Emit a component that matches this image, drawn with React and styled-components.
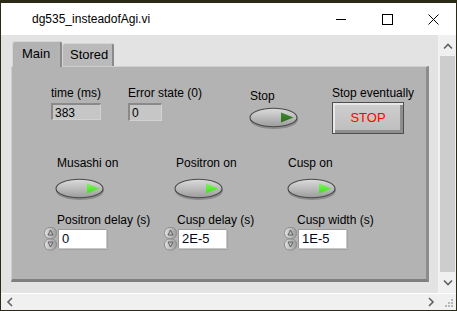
import React from "react";
import styled, { createGlobalStyle } from "styled-components";

const Global = createGlobalStyle`
  html, body { margin: 0; padding: 0; background: #2a2a17; }
  body { font-family: "Liberation Sans", Arial, sans-serif; font-size: 12px; color: #000; }
  * { box-sizing: border-box; }
`;

const Window = styled.div`
  width: 457px;
  height: 311px;
  display: flex;
  flex-direction: column;
  background: #2a2a17;
  padding: 3px 1px 1px 1px;
  overflow: hidden;
`;

const TitleBar = styled.div`
  height: 32px;
  background: #ffffff;
  display: flex;
  align-items: center;
  padding-left: 31px;
  flex-shrink: 0;
`;

const Title = styled.div`
  flex: 1;
  font-size: 12px;
  color: #000;
  margin-top: -1px;
`;

const CaptionButton = styled.div`
  width: 46px;
  height: 32px;
  display: flex;
  align-items: center;
  justify-content: center;
`;

const Body = styled.div`
  height: 258px;
  display: flex;
  flex-shrink: 0;
`;

const Content = styled.div`
  flex: 1;
  background: #e3e3e3;
  padding: 5px 0 0 10px;
  border-right: 1px solid #f4f4f4;
`;

const VScroll = styled.div`
  width: 17px;
  background: #f0f0f0;
  display: flex;
  flex-direction: column;
  align-items: center;
`;

const ScrollArrow = styled.div`
  height: 21px;
  width: 17px;
  display: flex;
  align-items: center;
  justify-content: center;
`;

const VThumb = styled.div`
  width: 15px;
  height: 216px;
  background: #cdcdcd;
`;

const HScroll = styled.div`
  height: 17px;
  background: #f0f0f0;
  display: flex;
  align-items: center;
  flex-shrink: 0;
  border-top: 1px solid #ffffff;
`;

const HTrack = styled.div`
  flex: 1;
`;

const Tabs = styled.div`
  display: flex;
  align-items: flex-end;
  height: 26px;
  padding-left: 1px;
  position: relative;
  z-index: 1;
`;

const Tab = styled.div`
  width: ${(p) => p.$w}px;
  height: ${(p) => (p.$active ? 26 : 23)}px;
  background: ${(p) => (p.$active ? "#b3b3b3" : "#bababa")};
  border-top: 1px solid #d6d6d6;
  border-left: 1px solid #d6d6d6;
  border-right: 2px solid #8a8a8a;
  border-top-left-radius: 3px;
  border-top-right-radius: 3px;
  padding: ${(p) => (p.$active ? "4px 0 0 9px" : "3px 0 0 7px")};
  font-size: 13px;
  color: #000;
  margin-bottom: ${(p) => (p.$active ? -1 : 0)}px;
`;

const Panel = styled.div`
  width: 418px;
  height: 216px;
  background: #b3b3b3;
  border-top: 1px solid #cfcfcf;
  border-left: 1px solid #cfcfcf;
  border-right: 3px solid #8c8c8c;
  border-bottom: 3px solid #7f7f7f;
  display: flex;
  flex-direction: column;
  padding-top: 19px;
`;

const Row = styled.div`
  display: grid;
  grid-template-columns: ${(p) => p.$cols};
  padding-left: ${(p) => p.$left}px;
  margin-top: ${(p) => p.$mt}px;
  height: ${(p) => p.$h}px;
  align-items: start;
`;

const Control = styled.div`
  display: flex;
  flex-direction: column;
  align-items: flex-start;
  margin-top: ${(p) => p.$mt || 0}px;
`;

const Label = styled.div`
  font-size: 12px;
  line-height: 14px;
  white-space: nowrap;
  margin-left: ${(p) => p.$ml || 0}px;
  margin-bottom: ${(p) => p.$mb || 0}px;
`;

const Indicator = styled.div`
  width: ${(p) => p.$w}px;
  height: ${(p) => p.$h}px;
  background: #c6c6c6;
  border-top: 2px solid #8a8a8a;
  border-left: 2px solid #8a8a8a;
  border-right: 1px solid #d2d2d2;
  border-bottom: 1px solid #d2d2d2;
  padding: 1px 0 0 2px;
  font-size: 12px;
  line-height: 14px;
`;

const StopButton = styled.div`
  width: 72px;
  height: 32px;
  border: 1px solid #4e4e4e;
  background: linear-gradient(#cfcfcf, #bdbdbd);
  box-shadow: inset 2px 2px 0 #e8e8e8, inset -3px -3px 0 #8e8e8e;
  display: flex;
  align-items: center;
  justify-content: center;
  color: #ff0000;
  font-size: 13px;
  padding-bottom: 1px;
`;

const NumRow = styled.div`
  display: flex;
  align-items: flex-start;
  gap: 1px;
`;

const NumInput = styled.div`
  width: 49px;
  height: 20px;
  margin-top: 2px;
  background: #ffffff;
  border-top: 1px solid #9a9a9a;
  border-left: 1px solid #9a9a9a;
  border-right: 1px solid #c8c8c8;
  border-bottom: 1px solid #c8c8c8;
  box-shadow: 1px 1px 0 #a4a4a4;
  padding: 1px 0 0 3px;
  font-size: 13px;
  line-height: 16px;
  color: #05051a;
`;

const Toggle = ({ led }) => {
  const id = "g" + led.replace("#", "");
  return (
    <svg width="52" height="24" viewBox="0 0 52 24">
      <defs>
        <linearGradient id={id + "b"} x1="0" y1="0" x2="0" y2="1">
          <stop offset="0" stopColor="#dcdcdc" />
          <stop offset="0.5" stopColor="#bcbcbc" />
          <stop offset="1" stopColor="#9c9c9c" />
        </linearGradient>
        <linearGradient id={id + "t"} x1="0" y1="0" x2="0" y2="1">
          <stop offset="0" stopColor={led === "#3fe21c" ? "#7cf25a" : "#3f8a2c"} />
          <stop offset="1" stopColor={led} />
        </linearGradient>
      </defs>
      <ellipse cx="25" cy="12.5" rx="24" ry="9.5" fill="#6a6a6a" opacity="0.55" />
      <ellipse cx="24.5" cy="10.5" rx="23.5" ry="9.3" fill={`url(#${id}b)`} stroke="#4a4a4a" strokeWidth="1.1" />
      <path d="M32 5.5 L44.5 10.5 L32 15.5 Z" fill={`url(#${id}t)`} />
    </svg>
  );
};

const Spinner = () => (
  <svg width="13" height="24" viewBox="0 0 13 24">
    <defs>
      <linearGradient id="sp" x1="0" y1="0" x2="1" y2="0">
        <stop offset="0" stopColor="#e2e2e2" />
        <stop offset="1" stopColor="#9a9a9a" />
      </linearGradient>
    </defs>
    <rect x="0.5" y="0.5" width="12" height="11" rx="5" fill="url(#sp)" stroke="#8c8c8c" />
    <rect x="0.5" y="12" width="12" height="11" rx="5" fill="url(#sp)" stroke="#8c8c8c" />
    <path d="M6.5 3 L9 8 L4 8 Z" fill="none" stroke="#555" strokeWidth="0.9" />
    <path d="M6.5 20 L9 15 L4 15 Z" fill="none" stroke="#555" strokeWidth="0.9" />
  </svg>
);

const Numeric = ({ label, value }) => (
  <Control>
    <Label $ml={13} $mb={0}>{label}</Label>
    <NumRow>
      <Spinner />
      <NumInput>{value}</NumInput>
    </NumRow>
  </Control>
);

const Chevron = ({ d }) => (
  <svg width="10" height="8" viewBox="0 0 10 8">
    <path d={d} fill="none" stroke="#606060" strokeWidth="1.6" />
  </svg>
);

export default function App() {
  return (
    <>
      <Global />
      <Window>
        <TitleBar>
          <Title>dg535_insteadofAgi.vi</Title>
          <CaptionButton>
            <svg width="10" height="10" viewBox="0 0 10 10">
              <path d="M0 5.5 H10" stroke="#000" strokeWidth="1" />
            </svg>
          </CaptionButton>
          <CaptionButton>
            <svg width="11" height="11" viewBox="0 0 11 11">
              <rect x="0.5" y="0.5" width="10" height="10" fill="none" stroke="#000" strokeWidth="1" />
            </svg>
          </CaptionButton>
          <CaptionButton>
            <svg width="11" height="11" viewBox="0 0 11 11">
              <path d="M0.5 0.5 L10.5 10.5 M10.5 0.5 L0.5 10.5" stroke="#000" strokeWidth="1" />
            </svg>
          </CaptionButton>
        </TitleBar>
        <Body>
          <Content>
            <Tabs>
              <Tab $active $w={50}>Main</Tab>
              <Tab $w={52}>Stored</Tab>
            </Tabs>
            <Panel>
              <Row $cols="77px 121px 83px auto" $left={39} $mt={0} $h={48}>
                <Control>
                  <Label $mb={3}>time (ms)</Label>
                  <Indicator $w={50} $h={17}>383</Indicator>
                </Control>
                <Control>
                  <Label $mb={3}>Error state (0)</Label>
                  <Indicator $w={34} $h={18}>0</Indicator>
                </Control>
                <Control $mt={3}>
                  <Label $mb={4} $ml={1}>Stop</Label>
                  <Toggle led="#2f6e20" />
                </Control>
                <Control>
                  <Label $mb={2}>Stop eventually</Label>
                  <StopButton>STOP</StopButton>
                </Control>
              </Row>
              <Row $cols="119px 113px auto" $left={43} $mt={22} $h={46}>
                <Control>
                  <Label $ml={2} $mb={8}>Musashi on</Label>
                  <Toggle led="#3fe21c" />
                </Control>
                <Control>
                  <Label $ml={2} $mb={8}>Positron on</Label>
                  <Toggle led="#3fe21c" />
                </Control>
                <Control>
                  <Label $ml={1} $mb={8}>Cusp on</Label>
                  <Toggle led="#3fe21c" />
                </Control>
              </Row>
              <Row $cols="120px 120px auto" $left={32} $mt={11} $h={40}>
                <Numeric label="Positron delay (s)" value="0" />
                <Numeric label="Cusp delay (s)" value="2E-5" />
                <Numeric label="Cusp width (s)" value="1E-5" />
              </Row>
            </Panel>
          </Content>
          <VScroll>
            <ScrollArrow>
              <Chevron d="M1 6.5 L5 2.5 L9 6.5" />
            </ScrollArrow>
            <VThumb />
            <HTrack />
            <ScrollArrow>
              <Chevron d="M1 1.5 L5 5.5 L9 1.5" />
            </ScrollArrow>
          </VScroll>
        </Body>
        <HScroll>
          <ScrollArrow>
            <svg width="8" height="10" viewBox="0 0 8 10">
              <path d="M6 1 L2 5 L6 9" fill="none" stroke="#606060" strokeWidth="1.6" />
            </svg>
          </ScrollArrow>
          <HTrack />
          <ScrollArrow>
            <svg width="8" height="10" viewBox="0 0 8 10">
              <path d="M2 1 L6 5 L2 9" fill="none" stroke="#606060" strokeWidth="1.6" />
            </svg>
          </ScrollArrow>
          <ScrollArrow>
            <svg width="12" height="12" viewBox="0 0 12 12">
              {[[9, 3], [9, 6], [6, 6], [9, 9], [6, 9], [3, 9]].map(([x, y], i) => (
                <rect key={i} x={x} y={y} width="2" height="2" fill="#b8b8b8" />
              ))}
            </svg>
          </ScrollArrow>
        </HScroll>
      </Window>
    </>
  );
}
